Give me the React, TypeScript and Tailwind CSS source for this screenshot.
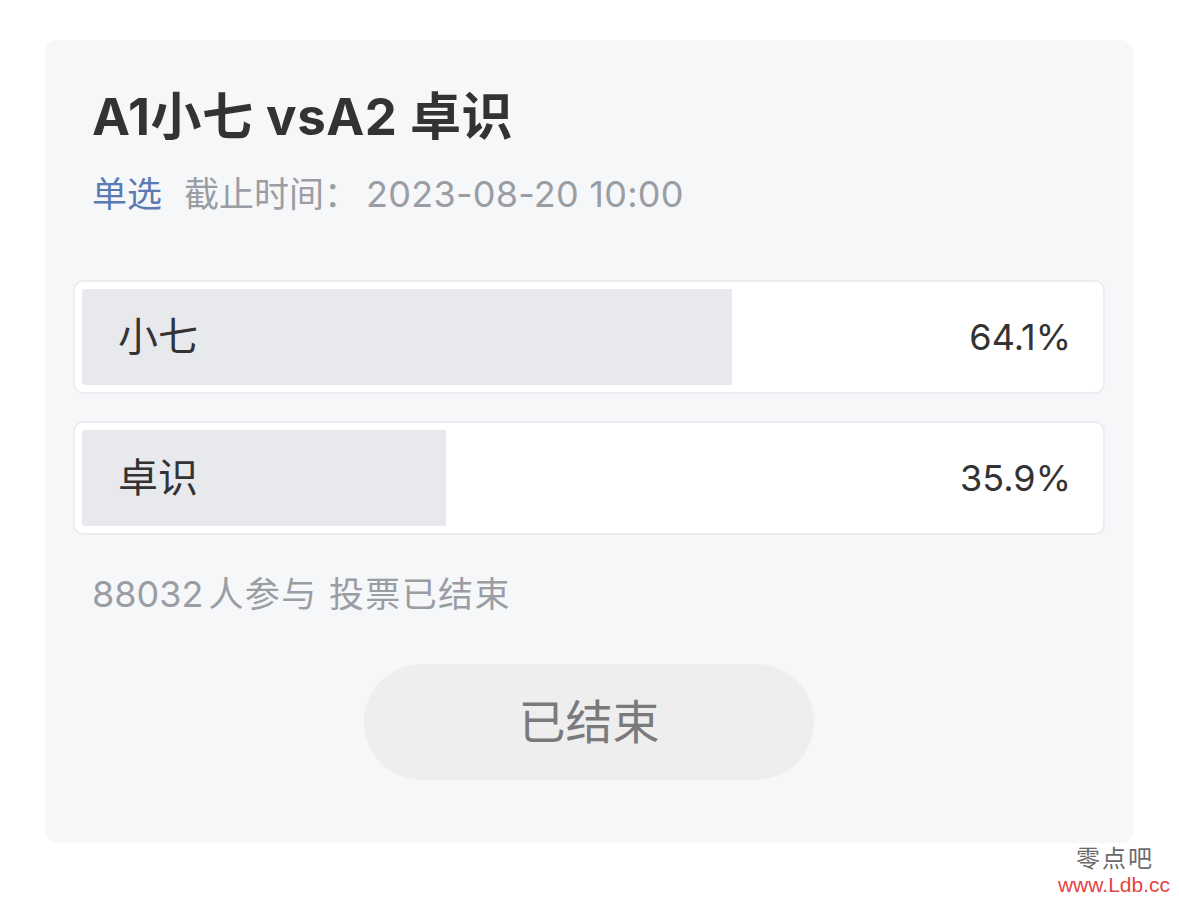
import React from "react";

interface Option {
  label: string;
  percent: number;
}

const options: Option[] = [
  { label: "小七", percent: 64.1 },
  { label: "卓识", percent: 35.9 },
];

const font = { fontFamily: 'Inter, "Noto Sans CJK SC", sans-serif' };

function OptionRow({ option }: { option: Option }) {
  return (
    <div className="h-[114px] rounded-[10px] border-2 border-[#ebecef] bg-white p-[7px]">
      <div className="relative flex h-full items-center justify-between">
        {/* fill */}
        <div
          className="absolute inset-y-0 left-0 rounded-l-[3px] bg-[#e8e9ec]"
          style={{ width: `${option.percent}%` }}
        />
        <span className="relative pl-[36px] text-[40px] text-[#333333]">{option.label}</span>
        <span className="relative pr-[25px] text-[36px] text-[#333333]">{option.percent}%</span>
      </div>
    </div>
  );
}

export default function App() {
  return (
    <div className="relative h-[898px] w-[1179px] bg-white pl-[45px] pt-[40px]" style={font}>
      <div className="flex h-[803px] w-[1088px] flex-col rounded-[12px] bg-[#f6f7f9] px-[28px] pt-[46px]">
        {/* Header */}
        <h1 className="pl-[19px] text-[51px] font-bold leading-[62px] tracking-[0.5px] text-[#333333]">
          A1小七 vsA2 卓识
        </h1>
        <div className="mt-[24px] flex items-center pl-[19px] text-[35px] leading-[44px]">
          <span className="text-[#5a7ab3]">单选</span>
          <span className="ml-[22px] text-[#9b9da4]">截止时间：</span>
          <span className="ml-[7px] text-[36px] tracking-[0.25px] text-[#9b9da4]">2023-08-20 10:00</span>
        </div>

        {/* Options */}
        <div className="mt-[64px] flex flex-col gap-[27px]">
          {options.map((o) => (
            <OptionRow key={o.label} option={o} />
          ))}
        </div>

        {/* Footer */}
        <div className="mt-[37px] flex items-center pl-[19px] text-[35px] leading-[44px] text-[#9b9da4]">
          <span className="text-[36px]">88032</span>
          <span className="ml-[5px] tracking-[1.4px]">人参与 投票已结束</span>
        </div>

        <div className="mt-[48px] flex justify-center">
          <button className="flex h-[116px] w-[450px] items-center justify-center rounded-full bg-[#eeeeef] text-[47px] text-[#7a7a7c]">
            已结束
          </button>
        </div>
      </div>

      {/* Watermark */}
      <div className="absolute bottom-[3px] right-[9px] flex flex-col items-end leading-none">
        <span className="mr-[16px] text-[24px] tracking-[2px] text-[#6b6b6b]" style={{ fontFamily: '"Noto Sans CJK SC", serif' }}>
          零点吧
        </span>
        <span className="mt-[5px] text-[21px] text-[#e5443f]" style={{ fontFamily: '"Liberation Sans", sans-serif' }}>
          www.Ldb.cc
        </span>
      </div>
    </div>
  );
}
